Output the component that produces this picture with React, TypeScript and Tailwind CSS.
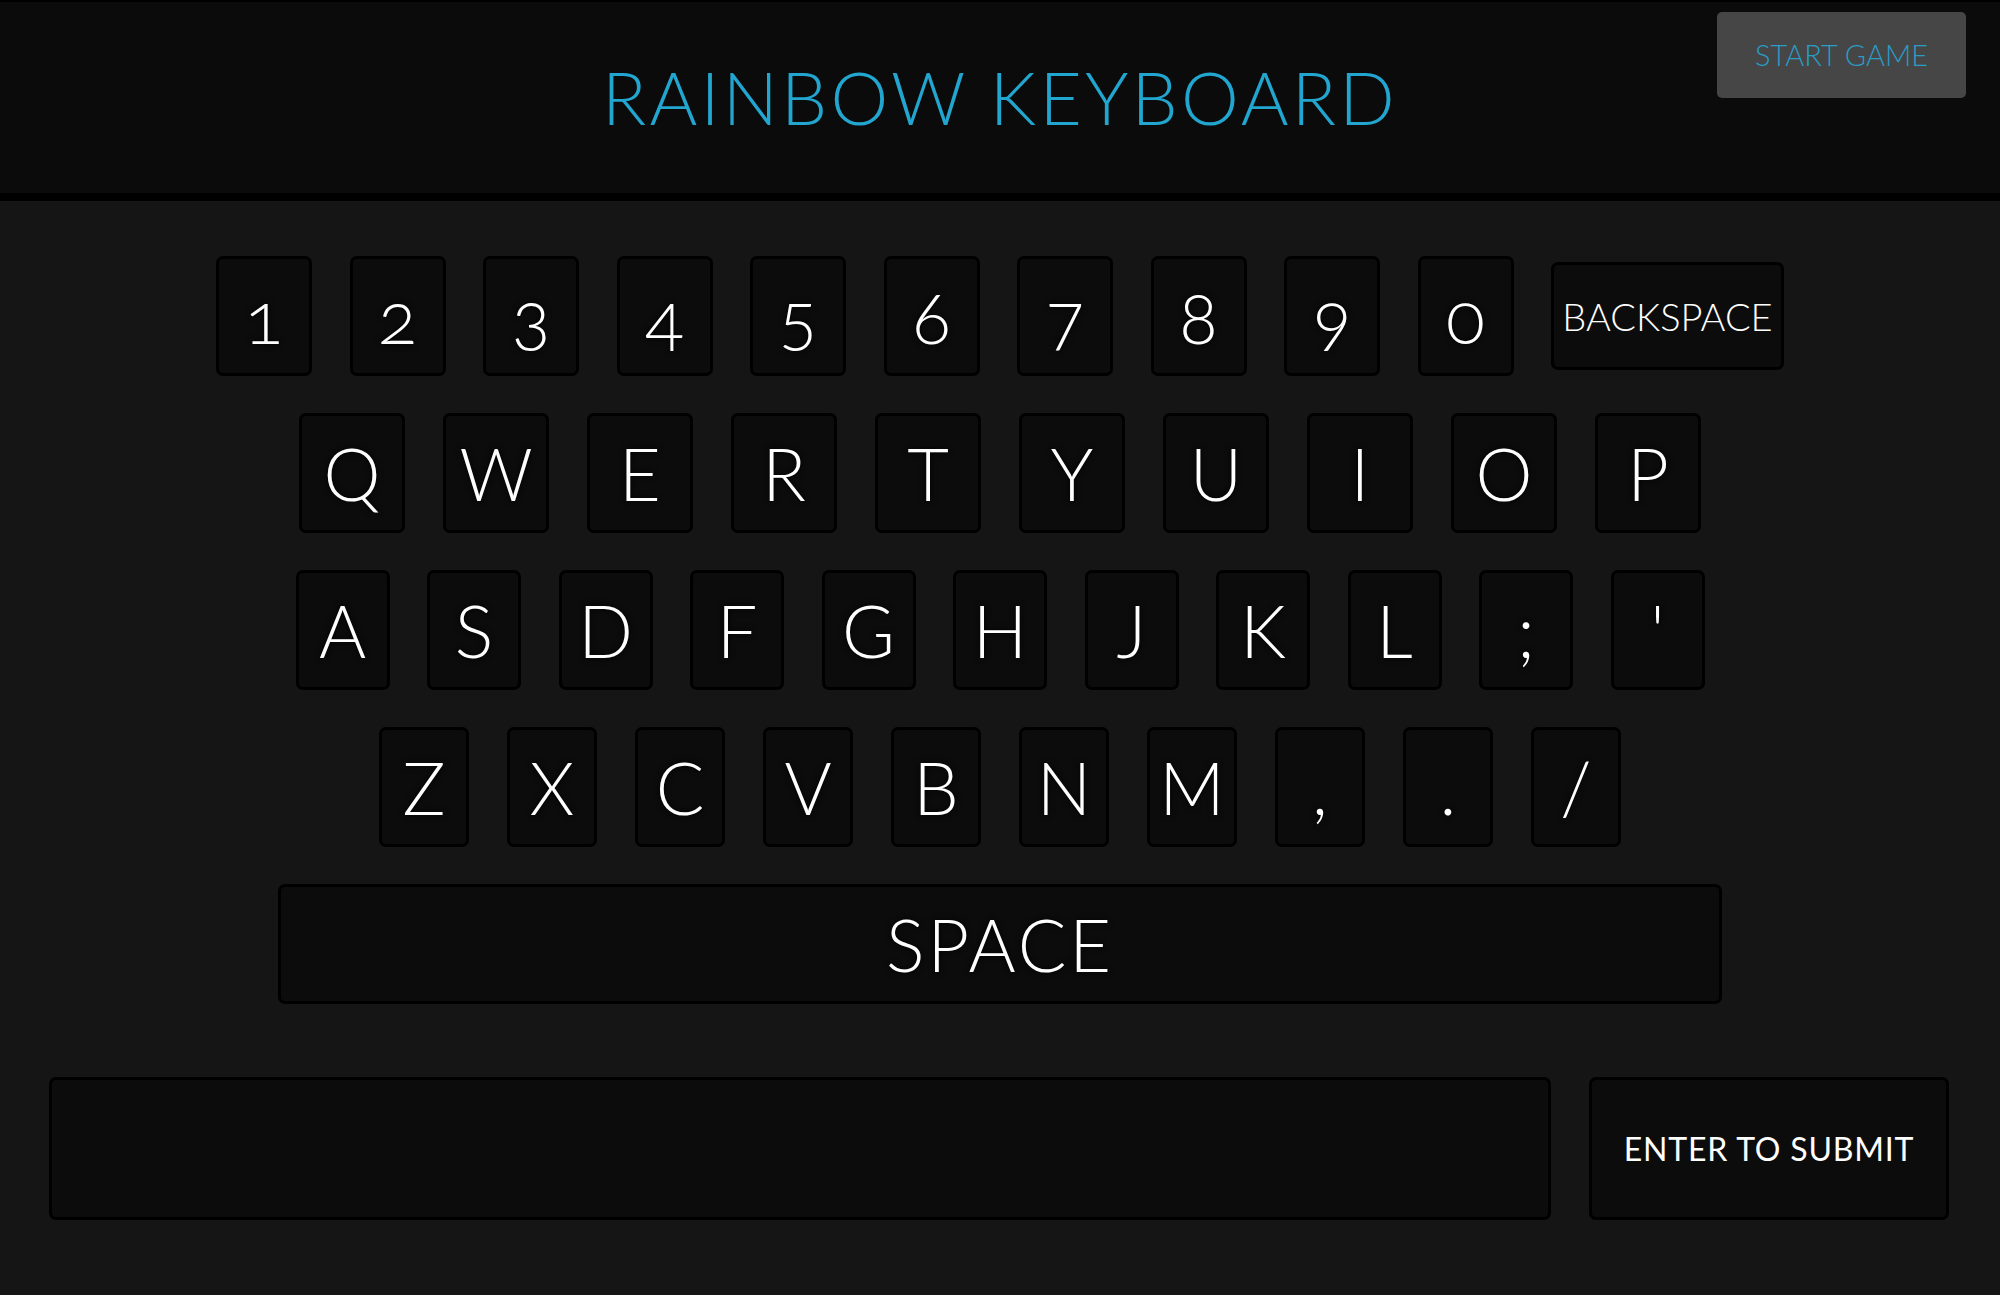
const numberKeys = ['1', '2', '3', '4', '5', '6', '7', '8', '9', '0'];
const topRow = ['Q', 'W', 'E', 'R', 'T', 'Y', 'U', 'I', 'O', 'P'];
const homeRow = ['A', 'S', 'D', 'F', 'G', 'H', 'J', 'K', 'L', ';', "'"];
const bottomRow = ['Z', 'X', 'C', 'V', 'B', 'N', 'M', ',', '.', '/'];

const keyBase =
  'flex items-center justify-center h-[120px] rounded-[7px] border-[3px] border-black bg-[#0c0c0c] text-white text-[72px] font-light leading-none [text-shadow:0_0_6px_#000]';

function Key({ label, width }: { label: string; width: string }) {
  return <div className={`${keyBase} ${width}`}>{label}</div>;
}

export default function App() {
  return (
    <div className="min-h-[1295px] bg-[#151515] font-['Lato','Open_Sans',sans-serif] oldstyle-nums">
      <header className="relative flex h-[201px] items-center justify-center border-t-2 border-b-8 border-black bg-[#0b0b0b]">
        <h1 className="text-[73px] font-light leading-none tracking-[3.2px] text-[#22a6cf]">
          RAINBOW KEYBOARD
        </h1>
        <button className="absolute right-[34px] top-[10px] flex h-[86px] w-[249px] items-center justify-center rounded-[5px] bg-[#464646] text-[29px] font-light text-[#2a9cc5]">
          START GAME
        </button>
      </header>

      <main className="flex flex-col items-center pt-[55px]">
        <div className="flex flex-col items-center gap-[37px]">
          <div className="flex items-center gap-[37.5px]">
            {numberKeys.map((k) => (
              <Key key={k} label={k} width="w-[96px]" />
            ))}
            <div className="flex h-[108px] w-[233px] items-center justify-center rounded-[7px] border-[3px] border-black bg-[#0c0c0c] text-[38px] font-light text-white">
              BACKSPACE
            </div>
          </div>

          <div className="flex gap-[38px]">
            {topRow.map((k) => (
              <Key key={k} label={k} width="w-[106px]" />
            ))}
          </div>

          <div className="flex gap-[37.5px]">
            {homeRow.map((k) => (
              <Key key={k} label={k} width="w-[94px]" />
            ))}
          </div>

          <div className="flex gap-[38px]">
            {bottomRow.map((k) => (
              <Key key={k} label={k} width="w-[90px]" />
            ))}
          </div>

          <div className={`${keyBase} w-[1444px] tracking-[3px]`}>SPACE</div>
        </div>

        <div className="mt-[73px] flex w-full gap-[38px] pl-[49px] pr-[51px]">
          <input
            className="h-[143px] flex-1 rounded-[7px] border-[3px] border-black bg-[#0c0c0c] px-6 text-[40px] font-light text-white outline-none"
            type="text"
          />
          <button className="h-[143px] w-[360px] rounded-[7px] border-[3px] border-black bg-[#0c0c0c] text-[32px] tracking-[0.8px] text-white">
            ENTER TO SUBMIT
          </button>
        </div>
      </main>
    </div>
  );
}
